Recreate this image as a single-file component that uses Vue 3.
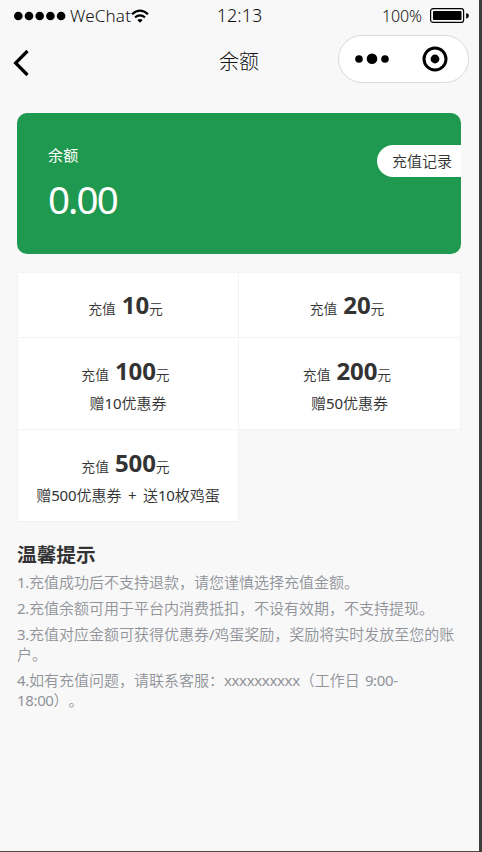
<script setup>
const plans = [
  { amount: '10' },
  { amount: '20' },
  { amount: '100', gift: '赠10优惠券' },
  { amount: '200', gift: '赠50优惠券' },
  { amount: '500', gift: '赠500优惠券 + 送10枚鸡蛋' },
]
const tips = [
  ['1.充值成功后不支持退款，请您谨慎选择充值金额。'],
  ['2.充值余额可用于平台内消费抵扣，不设有效期，不支持提现。'],
  ['3.充值对应金额可获得优惠券/鸡蛋奖励，奖励将实时发放至您的账', '户。'],
  ['4.如有充值问题，请联系客服：xxxxxxxxxx（工作日 9:00-', '18:00）。'],
]
// Separates Latin runs from Chinese ones so that each gets its own spacing
const runs = (text) =>
  text.split(/([\x21-\x7e]+)/).filter(Boolean).map((t) => ({ t, latin: /^[\x21-\x7e]/.test(t) }))
</script>

<template>
  <div class="screen">
    <header>
      <div class="status">
        <div class="carrier">
          <svg class="signal" width="52" height="10" viewBox="0 0 52 10">
            <circle v-for="i in 5" :key="i" :cx="4.3 + (i - 1) * 10.7" cy="5" r="4.3" />
          </svg>
          <span class="network">WeChat</span>
          <svg class="wifi" width="18" height="15" viewBox="0 0 18 15" fill="none" stroke="#000">
            <path d="M1 5.2Q9-2 17 5.2" stroke-width="2.2" />
            <path d="M4 8.4Q9 4.2 14 8.4" stroke-width="2.1" />
            <path d="M6.3 11.1Q9 8.9 11.7 11.1L9 13.8Z" fill="#000" stroke="none" />
          </svg>
        </div>
        <time>12:13</time>
        <div class="power">
          <span>100%</span>
          <svg width="40" height="16" viewBox="0 0 40 16">
            <rect x=".6" y=".6" width="33" height="13.8" rx="2.5" fill="none" stroke="#000" stroke-width="1.2" />
            <rect x="3" y="3" width="28.5" height="9" rx="1" />
            <path d="M36.2 5Q39 5.7 39 7.8T36.2 10.7Z" />
          </svg>
        </div>
      </div>
      <div class="nav">
        <svg class="back" width="18" height="28" viewBox="0 0 18 28" fill="none" stroke="#000" stroke-width="3.2">
          <path d="M14.5 2L2.6 14L14.5 26" />
        </svg>
        <h1>余额</h1>
        <div class="capsule">
          <svg width="34" height="12" viewBox="0 0 34 12">
            <circle cx="4" cy="6" r="3.8" /><circle cx="17" cy="5.7" r="5.3" /><circle cx="30" cy="6" r="3.8" />
          </svg>
          <svg width="26" height="26" viewBox="0 0 26 26">
            <circle cx="13" cy="13" r="11" fill="none" stroke="#000" stroke-width="3" />
            <circle cx="13" cy="13" r="4.4" />
          </svg>
        </div>
      </div>
    </header>

    <main>
      <section class="balance">
        <div class="figures">
          <p class="label">余额</p>
          <p class="value">0.00</p>
        </div>
        <div class="record">充值记录</div>
      </section>

      <section class="plans">
        <div v-for="p in plans" :key="p.amount" class="plan">
          <p class="amount"><span class="unit">充值</span><b>{{ p.amount }}</b><span class="unit">元</span></p>
          <p v-if="p.gift" class="gift"><span v-for="(r, i) in runs(p.gift)" :key="i" :class="{ latin: r.latin }">{{ r.t }}</span></p>
        </div>
      </section>

      <section class="tips">
        <h2>温馨提示</h2>
        <div v-for="(tip, n) in tips" :key="n" class="tip">
          <p v-for="(line, k) in tip" :key="k"><span v-for="(r, i) in runs(line)" :key="i" :class="{ latin: r.latin }">{{ r.t }}</span></p>
        </div>
      </section>
    </main>
  </div>
</template>

<style>
body {
  margin: 0;
  background: #f8f8f8;
}
</style>

<style scoped>
* {
  box-sizing: border-box;
}
p, h1, h2 {
  margin: 0;
}
.screen {
  width: 482px;
  height: 852px;
  overflow: hidden;
  border-right: 3px solid #3c3c3c;
  border-bottom: 1px solid #4a4a4a;
  background: #f8f8f8;
  color: #333;
  font-family: "Noto Sans", "Noto Sans CJK SC", sans-serif;
  font-weight: 350;
  text-spacing-trim: space-all;
  white-space: nowrap;
}
svg {
  display: block;
  flex: none;
}
header {
  height: 95px;
  color: #111;
}
.status {
  display: grid;
  grid-template-columns: 1fr auto 1fr;
  align-items: center;
  height: 31px;
  padding: 0 9px 0 14px;
}
.carrier, .power {
  display: flex;
  align-items: center;
}
.network {
  margin-left: 4px;
  font-size: 17px;
  font-weight: 300;
  line-height: 30px;
  letter-spacing: 0.2px;
}
.wifi {
  margin-top: 1px;
}
time {
  margin: -2px 5px 0 0;
  font-size: 18px;
  font-weight: 300;
  line-height: 30px;
}
.power {
  justify-content: flex-end;
  gap: 8px;
  font-size: 16px;
  font-weight: 300;
  letter-spacing: -0.1px;
}
.nav {
  display: grid;
  grid-template-columns: 1fr auto 1fr;
  align-items: center;
  margin-top: 4px;
  height: 48px;
  padding: 0 10px 0 13px;
}
.back {
  margin-top: 8px;
}
h1 {
  font-size: 20px;
  font-weight: 300;
  line-height: 28px;
  margin: 6px 4px 0 0;
}
.capsule {
  justify-self: end;
  display: flex;
  align-items: center;
  justify-content: space-between;
  width: 131px;
  height: 48px;
  padding: 0 20px 0 16px;
  border: 1px solid #dadada;
  border-radius: 24px;
  background: #fff;
}
main {
  padding: 18px 18px 0 17px;
}
.balance {
  display: flex;
  justify-content: space-between;
  align-items: flex-start;
  height: 141px;
  padding: 32px 0 0 31px;
  border-radius: 10px;
  background: #1f994f;
  color: #fff;
}
.label {
  font-size: 15px;
  font-weight: 400;
  line-height: 21px;
  letter-spacing: 0.3px;
}
.value {
  margin-top: 5px;
  font-size: 38.5px;
  font-weight: 400;
  line-height: 56px;
  letter-spacing: -1.9px;
}
.record {
  width: 84px;
  height: 32px;
  padding-left: 15px;
  border-radius: 16px 0 0 16px;
  background: #fff;
  color: #333;
  font-size: 15px;
  line-height: 32px;
}
.plans {
  display: grid;
  grid-template-columns: 222px 222px;
  margin-top: 18px;
  border-top: 1px solid #f2f3f4;
}
.plan {
  padding: 16px 0 12px;
  border: solid #f2f3f4;
  border-width: 0 1px 1px 0;
  background: #fff;
  text-align: center;
}
.plan:nth-child(odd) {
  border-left-width: 1px;
}
.amount {
  height: 36px;
  padding-right: 5px;
  line-height: 34px;
}
.unit {
  font-size: 13.8px;
}
.amount b {
  margin-left: 6px;
  font-size: 24px;
  letter-spacing: -0.1px;
}
.gift {
  height: 27px;
  font-size: 15px;
  line-height: 26px;
  word-spacing: 2.7px;
}
.plan:nth-child(-n + 2) {
  padding: 15px 0 13px;
}
.latin {
  font-weight: 400;
  letter-spacing: -0.35px;
}
.gift .latin {
  letter-spacing: -0.2px;
}
.tips {
  margin-top: 18px;
  color: #909399;
  font-size: 15px;
  word-spacing: 1.2px;
}
h2 {
  color: #333;
  font-size: 19.7px;
  line-height: 30px;
}
.tip {
  margin-top: 6px;
}
h2 + .tip {
  margin-top: 2px;
}
.tip p {
  height: 20px;
  line-height: 20px;
}
</style>
